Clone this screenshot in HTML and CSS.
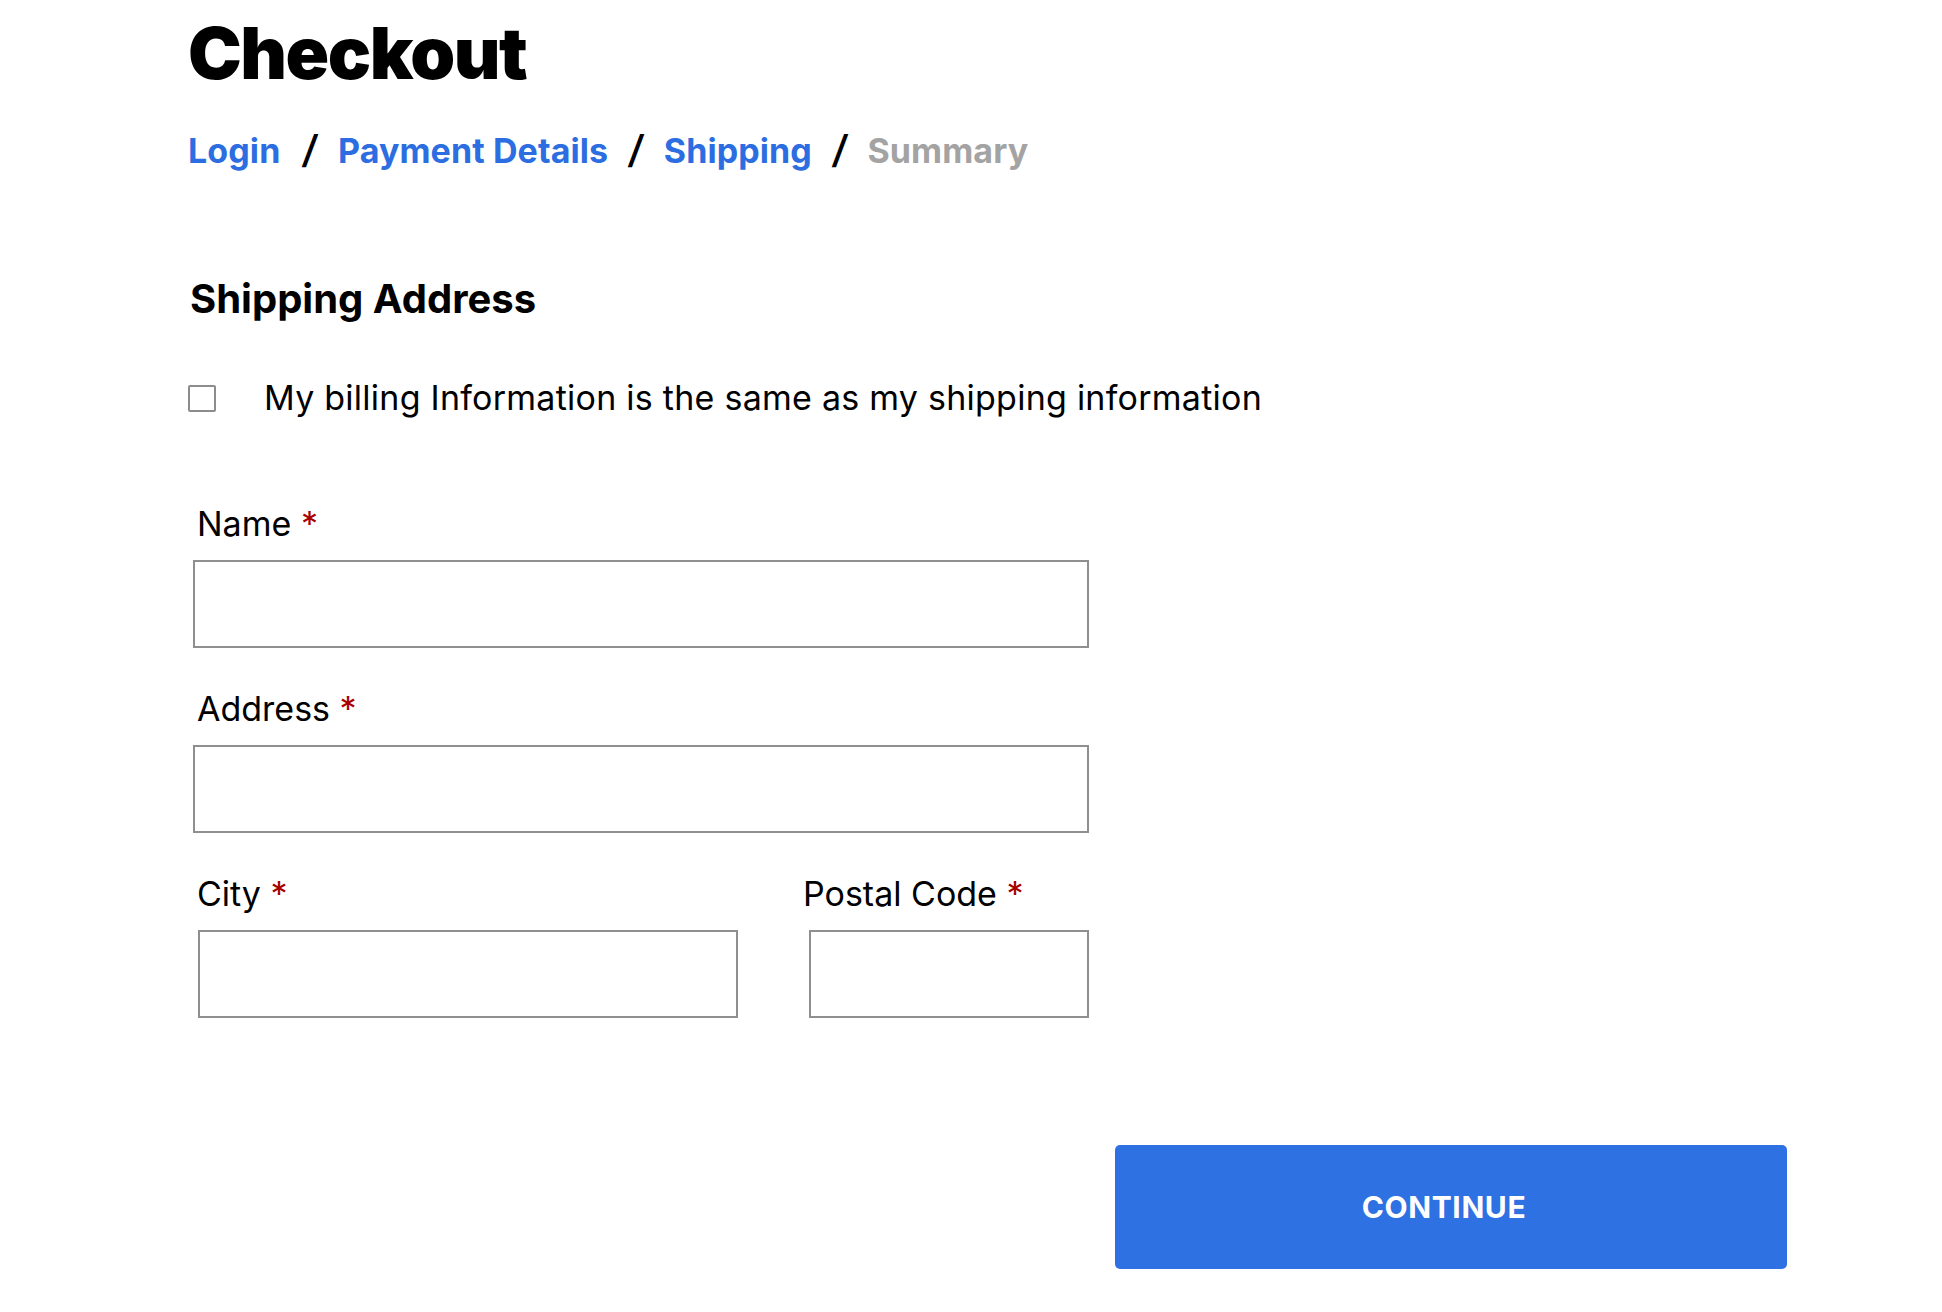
FILE: index.html
```html
<!DOCTYPE html>
<html lang="en">
<head>
<meta charset="utf-8">
<title>Checkout</title>
<link rel="stylesheet" href="styles.css">
</head>
<body>
<main class="checkout">
  <h1 class="title">Checkout</h1>
  <nav class="crumbs">
    <a class="crumb crumb-first" href="#">Login</a>
    <span class="sep">/</span>
    <a class="crumb" href="#">Payment Details</a>
    <span class="sep">/</span>
    <a class="crumb" href="#">Shipping</a>
    <span class="sep">/</span>
    <span class="crumb crumb-off">Summary</span>
  </nav>

  <section class="shipping">
    <h2 class="section-title">Shipping Address</h2>
    <label class="same">
      <span class="box"></span>
      <span class="same-text">My billing Information is the same as my shipping information</span>
    </label>

    <div class="fields">
      <div class="field field-wide">
        <div class="label">Name <span class="req">*</span></div>
        <div class="input"></div>
      </div>
      <div class="field field-wide">
        <div class="label">Address <span class="req">*</span></div>
        <div class="input"></div>
      </div>
      <div class="field field-city">
        <div class="label">City <span class="req">*</span></div>
        <div class="input"></div>
      </div>
      <div class="field field-postal">
        <div class="label">Postal Code <span class="req">*</span></div>
        <div class="input"></div>
      </div>
    </div>
  </section>

  <div class="actions">
    <button class="continue" type="button">CONTINUE</button>
  </div>
</main>
</body>
</html>
```
FILE: styles.css
```css
* { box-sizing: border-box; }

html, body {
  margin: 0;
  background: #ffffff;
}

body {
  font-family: Inter, "Open Sans", "Liberation Sans", sans-serif;
  color: #000;
}

.checkout {
  padding: 17px 0 0 188px;
}

.title {
  margin: 0;
  font-size: 72px;
  line-height: 72px;
  font-weight: 900;
  letter-spacing: -1.5px;
}

.crumbs {
  margin-top: 40px;
  display: flex;
  align-items: baseline;
  font-size: 34px;
  line-height: 40px;
  font-weight: 700;
  letter-spacing: 0.1px;
}

.crumb {
  color: #2c6ee1;
  text-decoration: none;
}

.crumb-first { margin-right: 2px; }

.crumb-off { color: #a3a3a3; }

.sep {
  color: #000;
  font-weight: 600;
  font-size: 38px;
  margin: 0 20px 0 21px;
  transform: skewX(-6deg);
}

.shipping {
  margin-top: 104px;
}

.section-title {
  margin: 0 0 0 2px;
  font-size: 40px;
  line-height: 48px;
  font-weight: 700;
}

.same {
  margin-top: 55px;
  display: flex;
  align-items: center;
  gap: 48px;
  font-size: 34px;
  line-height: 40px;
  font-weight: 400;
  letter-spacing: 0.25px;
}

.box {
  width: 28px;
  height: 27px;
  border: 2px solid #8c8c8c;
  border-radius: 2px;
  flex: none;
}

.fields {
  margin-top: 86px;
  width: 896px;
  margin-left: 5px;
  display: grid;
  grid-template-columns: 545px 280px;
  column-gap: 71px;
  row-gap: 41px;
}

.field-wide { grid-column: 1 / -1; }

.label {
  padding-left: 4px;
  font-size: 34px;
  line-height: 40px;
  font-weight: 400;
}

.field-postal .label { margin-left: -6px; padding-left: 0; }
.field-city .input { margin-left: 5px; }

.req {
  color: #a80000;
}

.input {
  margin-top: 16px;
  height: 88px;
  border: 2px solid #8f8f8f;
  background: #fff;
}

.actions {
  margin-top: 127px;
  padding-left: 927px;
  padding-bottom: 40px;
}

.continue {
  width: 672px;
  height: 124px;
  padding: 0 14px 0 0;
  border: 0;
  border-radius: 5px;
  background: #2e71e3;
  color: #fff;
  font-family: Inter, "Open Sans", "Liberation Sans", sans-serif;
  font-size: 30px;
  font-weight: 700;
  letter-spacing: 0.6px;
}
```
